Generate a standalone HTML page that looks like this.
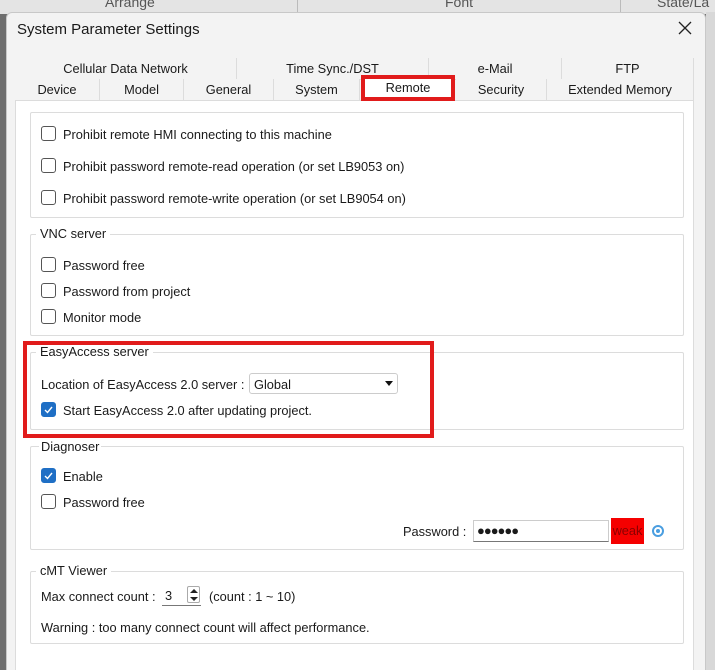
<!DOCTYPE html>
<html><head><style>
*{box-sizing:border-box;margin:0;padding:0}
html,body{width:715px;height:670px;overflow:hidden}
body{background:#6e6e6e;font-family:"Liberation Sans",sans-serif;font-size:12.8px;color:#1a1a1a;position:relative}
.a{position:absolute}
.top{left:0;top:0;width:715px;height:14px;background:#e4e4e4;color:#555;font-size:14px;overflow:hidden}
.dlg{left:6px;top:12px;width:700px;height:658px;background:#f3f3f3;border-radius:6px 6px 0 0;border:1px solid #c8c8c8;border-bottom:none}
.tab{position:absolute;height:21px;text-align:center;line-height:21px;border-right:1px solid #dcdcdc;background:#f3f3f3}
.panel{left:15px;top:100px;width:679px;height:570px;background:#fff;border:1px solid #dcdcdc;border-bottom:none}
.grp{position:absolute;border:1px solid #dcdcdc;border-radius:2px}
.gt{position:absolute;background:#fff;padding:0 4px;top:-9px;left:5px}
.cb{position:absolute;width:15px;height:15px;border:1px solid #555;border-radius:3px;background:#fff}
.cb.on{background:#1f6fc5;border-color:#1f6fc5}
.t{position:absolute;white-space:nowrap}
</style></head><body>
<div class="a top"><span class="a" style="left:105px;top:-6px">Arrange</span><span class="a" style="left:445px;top:-6px">Font</span><span class="a" style="left:657px;top:-6px">State/La</span>
<div class="a" style="left:297px;top:0;width:1px;height:14px;background:#bbb"></div><div class="a" style="left:620px;top:0;width:1px;height:14px;background:#bbb"></div></div>
<div class="a dlg"></div>
<div class="a" style="left:706px;top:12px;width:9px;height:658px;background:#d8d8d8"></div>
<div class="t" style="left:17px;top:21px;font-size:15px">System Parameter Settings</div>
<svg class="a" style="left:678px;top:21px" width="14" height="14"><path d="M1 1L13 13M13 1L1 13" stroke="#222" stroke-width="1.3"/></svg>
<div class="tab" style="left:15px;top:58px;width:222px">Cellular Data Network</div>
<div class="tab" style="left:237px;top:58px;width:192px">Time Sync./DST</div>
<div class="tab" style="left:429px;top:58px;width:133px">e-Mail</div>
<div class="tab" style="left:562px;top:58px;width:132px">FTP</div>
<div class="a" style="left:15px;top:79px;width:679px;height:1px;background:#dcdcdc"></div>
<div class="tab" style="left:15px;top:79px;width:85px">Device</div>
<div class="tab" style="left:100px;top:79px;width:84px">Model</div>
<div class="tab" style="left:184px;top:79px;width:90px">General</div>
<div class="tab" style="left:274px;top:79px;width:86px">System</div>
<div class="tab" style="left:456px;top:79px;width:91px">Security</div>
<div class="tab" style="left:547px;top:79px;width:147px">Extended Memory</div>
<div class="a panel"></div>
<div class="a" style="left:361px;top:75px;width:94px;height:26px;background:#fff;border:4px solid #e11b1b;text-align:center;line-height:17px">Remote</div>

<div class="grp" style="left:30px;top:112px;width:654px;height:106px"></div>
<div class="cb" style="left:41px;top:126px"></div><div class="t" style="left:63px;top:127px">Prohibit remote HMI connecting to this machine</div>
<div class="cb" style="left:41px;top:158px"></div><div class="t" style="left:63px;top:159px">Prohibit password remote-read operation (or set LB9053 on)</div>
<div class="cb" style="left:41px;top:190px"></div><div class="t" style="left:63px;top:191px">Prohibit password remote-write operation (or set LB9054 on)</div>

<div class="grp" style="left:30px;top:234px;width:654px;height:102px"><span class="gt">VNC server</span></div>
<div class="cb" style="left:41px;top:257px"></div><div class="t" style="left:63px;top:258px">Password free</div>
<div class="cb" style="left:41px;top:283px"></div><div class="t" style="left:63px;top:284px">Password from project</div>
<div class="cb" style="left:41px;top:309px"></div><div class="t" style="left:63px;top:310px">Monitor mode</div>

<div class="grp" style="left:30px;top:352px;width:654px;height:78px"><span class="gt">EasyAccess server</span></div>
<div class="t" style="left:41px;top:377px">Location of EasyAccess 2.0 server :</div>
<div class="a" style="left:249px;top:373px;width:149px;height:21px;border:1px solid #ccc;border-radius:3px;background:#fff;padding:3px 4px">Global<svg class="a" style="left:135px;top:7px" width="8" height="5"><path d="M0 0H8L4 5Z" fill="#111"/></svg></div>
<div class="cb on" style="left:41px;top:402px"><svg width="13" height="13"><path d="M3 7L5.5 9.5L10 4" stroke="#fff" stroke-width="1.4" fill="none"/></svg></div><div class="t" style="left:63px;top:403px">Start EasyAccess 2.0 after updating project.</div>
<div class="a" style="left:23px;top:341px;width:411px;height:97px;border:4px solid #e11b1b"></div>

<div class="grp" style="left:30px;top:446px;width:654px;height:104px"></div>
<div class="t" style="left:39px;top:439px;background:#fff;padding:0 2px">Diagnoser</div>
<div class="cb on" style="left:41px;top:468px"><svg width="13" height="13"><path d="M3 7L5.5 9.5L10 4" stroke="#fff" stroke-width="1.4" fill="none"/></svg></div><div class="t" style="left:63px;top:469px">Enable</div>
<div class="cb" style="left:41px;top:494px"></div><div class="t" style="left:63px;top:495px">Password free</div>
<div class="t" style="left:403px;top:524px">Password :</div>
<div class="a" style="left:473px;top:520px;width:136px;height:22px;border:1px solid #ccc;border-bottom:1px solid #777;background:#fff;padding:2px 3px;font-size:13px;letter-spacing:-1px">●●●●●●</div>
<div class="a" style="left:611px;top:518px;width:33px;height:26px;background:#f50000;color:#8a0000;line-height:26px;text-align:center">weak</div>
<div class="a" style="left:652px;top:525px;width:12px;height:12px;border-radius:50%;border:2px solid #4a9ee0"><div class="a" style="left:2px;top:2px;width:4px;height:4px;border-radius:50%;background:#4a9ee0"></div></div>

<div class="grp" style="left:30px;top:571px;width:654px;height:73px"><span class="gt">cMT Viewer</span></div>
<div class="t" style="left:41px;top:589px">Max connect count :</div>
<div class="a" style="left:162px;top:585px;width:39px;height:21px;border-bottom:1px solid #777;padding:3px 3px">3
<div class="a" style="left:25px;top:1px;width:13px;height:17px;border:1px solid #aaa;border-radius:2px"><svg class="a" style="left:2px;top:2px" width="8" height="12"><path d="M0 4L4 0L8 4Z M0 8L8 8L4 12Z" fill="#222"/></svg></div></div>
<div class="t" style="left:209px;top:589px">(count : 1 ~ 10)</div>
<div class="t" style="left:41px;top:620px">Warning : too many connect count will affect performance.</div>
</body></html>
